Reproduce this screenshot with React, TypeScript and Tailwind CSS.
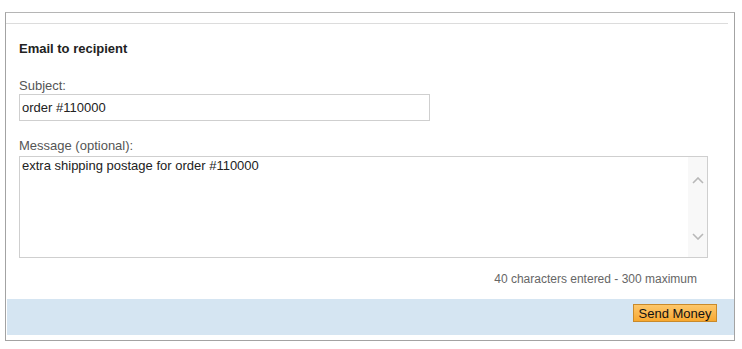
import React from "react";

export default function App() {
  const font = { fontFamily: '"Liberation Sans", Arial, sans-serif' };
  return (
    <div className="w-[742px] h-[349px] bg-white pt-[12px] pl-[5px]" style={font}>
      <div className="w-[730px] h-[329px] border border-[#a3a3a3] border-t-[#b5b5b5] flex flex-col">
        <div className="h-[11px] border-b border-[#dcdcdc] mr-[6px] shrink-0" />
        <div className="pl-[13px] flex flex-col">
          <div className="mt-[17px] text-[13px] leading-[16px] font-bold text-[#222]">Email to recipient</div>
          <div className="mt-[21px] text-[13px] leading-[16px] text-[#555]">Subject:</div>
          <div className="w-[411px] h-[27px] border border-[#cfcfcf] flex items-center pl-[2px] text-[13px] text-[#222]">
            order #110000
          </div>
          <div className="mt-[17px] text-[13px] leading-[16px] text-[#555]">Message (optional):</div>
          <div className="mt-[2px] w-[689px] h-[102px] border border-[#cfcfcf] flex">
            <div className="flex-1 pl-[2px] pt-[1px] text-[13px] leading-[16px] text-[#222]">
              extra shipping postage for order #110000
            </div>
            <div className="w-[19px] bg-[#f8f8f8] flex flex-col items-center pt-[20px] pb-[17px] justify-between">
              <svg width="12" height="7" viewBox="0 0 12 7" fill="none">
                <path d="M1 6 L6 1 L11 6" stroke="#b8b8b8" strokeWidth="1.6" />
              </svg>
              <svg width="12" height="7" viewBox="0 0 12 7" fill="none">
                <path d="M1 1 L6 6 L11 1" stroke="#b8b8b8" strokeWidth="1.6" />
              </svg>
            </div>
          </div>
          <div className="mt-[13px] w-[678px] text-right text-[12px] leading-[16px] text-[#666]">
            40 characters entered - 300 maximum
          </div>
        </div>
        <div className="mt-[12px] ml-[1px] h-[36px] bg-[#d5e5f2] flex justify-end items-start pt-[5px] pr-[17px]">
          <button className="w-[84px] h-[18px] border border-[#c98a2b] bg-gradient-to-b from-[#fdc76a] to-[#f7a82e] text-[13px] leading-[15px] text-[#111]">
            Send Money
          </button>
        </div>
      </div>
    </div>
  );
}
